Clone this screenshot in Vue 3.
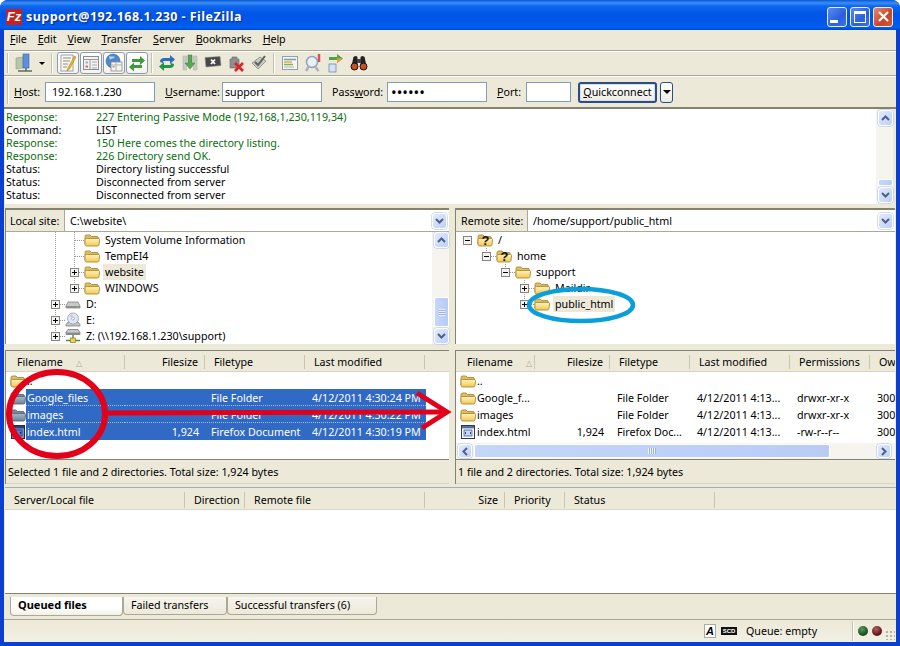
<template>
  <div class="window">
    <svg class="defs" width="0" height="0" aria-hidden="true">
      <defs>
        <linearGradient id="fold" x1="0" y1="0" x2="0" y2="1">
          <stop offset="0" stop-color="#fff3c0" />
          <stop offset="1" stop-color="#f2c94f" />
        </linearGradient>
        <linearGradient id="foldSel" x1="0" y1="0" x2="0" y2="1">
          <stop offset="0" stop-color="#a9b6c6" />
          <stop offset="1" stop-color="#6f8197" />
        </linearGradient>
        <symbol id="folder" viewBox="0 0 16 16">
          <path d="M1 12V4.5C1 3.5 1.6 3 2.5 3H6l1.5 1.5H13c.8 0 1.3.5 1.3 1.2V7H4z" fill="#e6bf5c" stroke="#a07f2c" stroke-width=".8" />
          <path d="M1 7.5C1 6.8 1.5 6.4 2.2 6.4H14.2C15.2 6.4 15.7 7 15.6 7.8L15 12.6C14.9 13.5 14.3 14 13.5 14H2.6C1.6 14 1 13.4 1 12.5Z" fill="url(#fold)" stroke="#a07f2c" stroke-width=".8" />
        </symbol>
        <symbol id="folder-sel" viewBox="0 0 16 16">
          <path d="M1 12V4.5C1 3.5 1.6 3 2.5 3H6l1.5 1.5H13c.8 0 1.3.5 1.3 1.2V7H4z" fill="#7d8ea3" stroke="#4c5c70" stroke-width=".8" />
          <path d="M1 7.5C1 6.8 1.5 6.4 2.2 6.4H14.2C15.2 6.4 15.7 7 15.6 7.8L15 12.6C14.9 13.5 14.3 14 13.5 14H2.6C1.6 14 1 13.4 1 12.5Z" fill="url(#foldSel)" stroke="#4c5c70" stroke-width=".8" />
        </symbol>
        <symbol id="folder-q" viewBox="0 0 16 16">
          <use href="#folder" width="16" height="16" />
          <text x="8.5" y="13" font-size="13" font-weight="700" font-family="Liberation Sans, sans-serif" text-anchor="middle" fill="#111">?</text>
        </symbol>
        <symbol id="html" viewBox="0 0 16 16">
          <rect x="1.5" y="1.5" width="13" height="13" fill="#fff" stroke="#2d3a55" />
          <rect x="2" y="2" width="12" height="2.4" fill="#5c6f94" />
          <rect x="4" y="6" width="8" height="6" fill="#c7d6f4" stroke="#3c5fa8" stroke-width=".8" />
          <path d="M6 8 5 9l1 1M10 8l1 1-1 1" stroke="#223" stroke-width=".8" fill="none" />
        </symbol>
        <symbol id="html-sel" viewBox="0 0 16 16">
          <rect x="1.5" y="1.5" width="13" height="13" fill="#7a92c8" stroke="#1e2a4c" />
          <rect x="2" y="2" width="12" height="2.4" fill="#2f4173" />
          <rect x="4" y="6" width="8" height="6" fill="#5f7fc4" stroke="#1e3a85" stroke-width=".8" />
          <path d="M6 8 5 9l1 1M10 8l1 1-1 1" stroke="#112" stroke-width=".8" fill="none" />
        </symbol>
        <symbol id="drive" viewBox="0 0 16 16">
          <path d="M3 6h10l2 4v2H1v-2z" fill="#c9c9c9" stroke="#777" stroke-width=".7" />
          <path d="M1 10h14v2H1z" fill="#8f8f8f" />
          <circle cx="12.5" cy="11" r=".7" fill="#5fcf5f" />
        </symbol>
        <symbol id="cd" viewBox="0 0 16 16">
          <path d="M3 10h10l2 2.5V14H1v-1.5z" fill="#c4c4c4" stroke="#777" stroke-width=".7" />
          <circle cx="8" cy="6.5" r="5.5" fill="#dfe6f5" stroke="#8b93ab" stroke-width=".7" />
          <circle cx="8" cy="6.5" r="1.5" fill="#fff" stroke="#8b93ab" stroke-width=".6" />
          <path d="M4 4.5A5 5 0 0 1 7 2.2L7.8 5z" fill="#e2b7ec" />
        </symbol>
        <symbol id="netdrive" viewBox="0 0 16 16">
          <path d="M3 1.5h10l2 3v2H1v-2z" fill="#c9c9c9" stroke="#666" stroke-width=".7" />
          <path d="M1 4.6h14v2H1z" fill="#8a8a8a" />
          <path d="M8 7v4M1 12.5h14" stroke="#5a8a3a" stroke-width="1.4" />
          <rect x="5.5" y="10" width="5" height="4.5" fill="#f0cf5a" stroke="#967720" stroke-width=".7" />
        </symbol>
        <symbol id="plus" viewBox="0 0 9 9">
          <rect x=".5" y=".5" width="8" height="8" fill="#f4f3ee" stroke="#848484" />
          <path d="M2 4.5h5M4.5 2v5" stroke="#000" />
        </symbol>
        <symbol id="minus" viewBox="0 0 9 9">
          <rect x=".5" y=".5" width="8" height="8" fill="#f4f3ee" stroke="#848484" />
          <path d="M2 4.5h5" stroke="#000" />
        </symbol>
        <symbol id="chev-up" viewBox="0 0 9 6"><path d="M1 5l3.5-3.5L8 5" fill="none" stroke="#4d6185" stroke-width="2" /></symbol>
        <symbol id="chev-down" viewBox="0 0 9 6"><path d="M1 1l3.5 3.5L8 1" fill="none" stroke="#4d6185" stroke-width="2" /></symbol>
        <symbol id="chev-left" viewBox="0 0 6 9"><path d="M5 1L1.5 4.5 5 8" fill="none" stroke="#4d6185" stroke-width="2" /></symbol>
        <symbol id="chev-right" viewBox="0 0 6 9"><path d="M1 1l3.5 3.5L1 8" fill="none" stroke="#4d6185" stroke-width="2" /></symbol>
      </defs>
    </svg>

    <header class="titlebar">
      <span class="app-logo">Fz</span>
      <span class="title-text">support@192.168.1.230 - FileZilla</span>
      <div class="win-btns">
        <button class="win-btn"><i class="glyph-min" /></button>
        <button class="win-btn"><i class="glyph-max" /></button>
        <button class="win-btn win-btn--close">
          <svg width="13" height="13" viewBox="0 0 13 13"><path d="M2 2l9 9M11 2l-9 9" stroke="#fff" stroke-width="2.2" /></svg>
        </button>
      </div>
    </header>

    <div class="content">
      <nav class="menubar">
        <span v-for="m in menus" :key="m.rest" class="menu-item"><u>{{ m.key }}</u>{{ m.rest }}</span>
      </nav>

      <div class="toolbar">
        <i class="grip" />
        <svg class="tool" width="20" height="20" viewBox="0 0 20 20">
          <path d="M1 5l7-1v11l-7 1z" fill="#b5c7a8" stroke="#8ea383" stroke-width=".6" />
          <rect x="8" y="1" width="6" height="14" fill="#5f8fdc" stroke="#3d68ad" stroke-width=".6" />
          <path d="M3 18h14M11 15v3" stroke="#5d6f57" stroke-width="1.5" />
        </svg>
        <i class="drop-arrow" />
        <i class="tool-sep tool-sep--a" />
        <div class="toggles">
          <button class="toggle">
            <svg width="18" height="18" viewBox="0 0 18 18">
              <rect x="2" y="1" width="12" height="16" fill="#fbf8ee" stroke="#8c8c8c" stroke-width=".8" />
              <path d="M4 4h8M4 7h7M4 10h5M4 13h4" stroke="#8a8a8a" />
              <path d="M15.500 2 9 14l-1 3 2.500-2L17 3z" fill="#f3b92b" stroke="#a87a10" stroke-width=".6" />
            </svg>
          </button>
          <button class="toggle">
            <svg width="18" height="18" viewBox="0 0 18 18">
              <rect x="1.500" y="2.500" width="15" height="13" fill="#f4f3f2" stroke="#8c8c8c" />
              <path d="M1.500 5.500h15M8 5.500v10" stroke="#9a9a9a" />
              <rect x="3.500" y="7.500" width="2.500" height="2" fill="#aab" />
              <rect x="3.500" y="11.500" width="2.500" height="2" fill="#c86a6a" />
              <path d="M10 8h5M10 11h5M10 14h5" stroke="#aaa" />
            </svg>
          </button>
          <button class="toggle">
            <svg width="20" height="20" viewBox="0 0 20 20">
              <circle cx="9" cy="8" r="7" fill="#4f87c9" stroke="#2d5f9e" stroke-width=".6" />
              <path d="M5 3c2 1 4 0 6 1-1 2-4 1-5 3z" fill="#b9d4ee" />
              <rect x="7" y="9" width="11" height="9" fill="#f6f4ee" stroke="#8c8c8c" stroke-width=".8" />
              <path d="M7 12h11M12 9v9" stroke="#b0b0b0" />
              <rect x="8.500" y="13" width="2" height="1.500" fill="#d88" />
            </svg>
          </button>
          <button class="toggle">
            <svg width="20" height="20" viewBox="0 0 20 20">
              <path d="M5 6h8V3l5 4.500L13 12V9H5z" fill="#3f9a3f" />
              <path d="M15 12H7V9.500l-5 4.500 5 4.500V15h8z" fill="#3f9a3f" />
            </svg>
          </button>
        </div>
        <i class="tool-sep tool-sep--b" />
        <div class="tool-group tool-group--actions">
          <svg width="18" height="18" viewBox="0 0 18 18">
            <path d="M2 8c0-3 2-4 4-4h6V1l5 4.500L12 10V7H6C5 7 4.800 8 5 9z" fill="#2f6cbd" />
            <path d="M16 10c0 3-2 4-4 4H6v3L1 12.500 6 8v3h6c1 0 1.200-1 1-2z" fill="#1e9444" />
          </svg>
          <svg width="18" height="18" viewBox="0 0 18 18">
            <path d="M2 2h3.500v14H2zM12.500 2H16v14h-3.500z" fill="#c9c9c6" stroke="#a9a9a6" stroke-width=".5" />
            <path d="M7 1h4v8h3l-5 6-5-6h3z" fill="#58a850" stroke="#3b7f35" stroke-width=".5" />
          </svg>
          <svg width="18" height="18" viewBox="0 0 18 18">
            <path d="M1 3.500 16 2.500l1 9-15 1.500z" fill="#474747" stroke="#8b8b8b" stroke-width=".6" />
            <path d="M7 5.500l4 4.500M11 5.500 7 10" stroke="#fff" stroke-width="1.800" />
          </svg>
          <svg width="18" height="18" viewBox="0 0 18 18">
            <path d="M5 3h5v2h2v9H3V5h2z" fill="#8e8e90" stroke="#6a6a6a" stroke-width=".6" />
            <path d="M8 9l8 8M16 9l-8 8" stroke="#db2328" stroke-width="2.600" />
          </svg>
          <svg width="18" height="18" viewBox="0 0 18 18">
            <path d="M2 9l8-6 6 4-8 8z" fill="#c8c8c3" stroke="#7f7f7a" stroke-width=".7" />
            <path d="M5 8l3 3 7-9" stroke="#62625e" stroke-width="2" fill="none" />
          </svg>
        </div>
        <i class="tool-sep tool-sep--c" />
        <div class="tool-group tool-group--views">
          <svg width="18" height="18" viewBox="0 0 18 18">
            <rect x="1.500" y="2.500" width="15" height="13" fill="#f7f5e8" stroke="#8fa0ae" />
            <path d="M3 5.500h12" stroke="#6f9cc4" stroke-width="1.500" />
            <path d="M3 8h8" stroke="#e2ad3d" stroke-width="1.500" />
            <path d="M3 10.500h9" stroke="#79b35d" stroke-width="1.500" />
            <path d="M3 13h10" stroke="#c9c9b8" stroke-width="1.500" />
          </svg>
          <svg width="18" height="20" viewBox="0 0 18 20">
            <circle cx="8" cy="9" r="5.500" fill="#eaf0f8" stroke="#93a2bb" stroke-width="1.500" />
            <path d="M2 18l3-5" stroke="#a7b2c4" stroke-width="2.500" />
            <path d="M11.500 14l3 4" stroke="#a7b2c4" stroke-width="2.500" />
            <path d="M15 1v8" stroke="#d9525a" stroke-width="2.500" />
          </svg>
          <svg width="18" height="20" viewBox="0 0 18 20">
            <path d="M2 4h8V1l6 4.500L10 10V7H2z" fill="#4ea64a" />
            <path d="M10 5l6 .5L10 10z" fill="#e89a3c" />
            <rect x="2" y="11" width="7" height="8" fill="#d6e2f2" stroke="#5c7fb0" stroke-width=".7" />
          </svg>
          <svg width="18" height="18" viewBox="0 0 18 18">
            <path d="M3 5c0-2 1-3 3-3l1.500 1v7H2z" fill="#222" />
            <path d="M15 5c0-2-1-3-3-3l-1.500 1v7H16z" fill="#222" />
            <circle cx="4.500" cy="12.500" r="3.500" fill="#c94e22" stroke="#111" />
            <circle cx="13.500" cy="12.500" r="3.500" fill="#c94e22" stroke="#111" />
            <rect x="7" y="5" width="4" height="4" fill="#444" />
          </svg>
        </div>
      </div>

      <form class="quickbar" @submit.prevent>
        <i class="grip grip--tall" />
        <label class="qlabel qlabel--host"><u>H</u>ost:</label>
        <input class="qinput qinput--host" value="192.168.1.230" />
        <label class="qlabel qlabel--user"><u>U</u>sername:</label>
        <input class="qinput qinput--user" value="support" />
        <label class="qlabel qlabel--pass">Pass<u>w</u>ord:</label>
        <input class="qinput qinput--pass" type="password" value="secret" />
        <label class="qlabel qlabel--port"><u>P</u>ort:</label>
        <input class="qinput qinput--port" />
        <button class="qbtn" type="button"><u>Q</u>uickconnect</button>
        <button class="qdrop" type="button"><i class="drop-arrow drop-arrow--inline" /></button>
      </form>

      <section class="log">
        <div class="log-lines">
          <div v-for="(l, i) in logLines" :key="i" class="log-line" :class="{ 'log-line--ok': l[0] === 'Response:' }">
            <span class="log-kind">{{ l[0] }}</span><span>{{ l[1] }}</span>
          </div>
        </div>
        <div class="vscroll vscroll--log">
          <span class="sb-btn"><svg width="9" height="6"><use href="#chev-up" /></svg></span>
          <span class="sb-track sb-track--end"><i class="sb-thumb sb-thumb--log" /></span>
          <span class="sb-btn"><svg width="9" height="6"><use href="#chev-down" /></svg></span>
        </div>
      </section>

      <div class="split split--sites">
        <section class="site">
          <div class="site-head">
            <span class="site-label site-label--local">Local site:</span>
            <span class="site-path">C:\website\</span>
            <span class="sb-btn sb-btn--combo"><svg width="9" height="6"><use href="#chev-down" /></svg></span>
          </div>
          <div class="site-body">
            <div class="tree tree--local">
              <div v-for="row in localTree" :key="row.label" class="tree-row">
                <span v-for="(c, i) in row.cells" :key="i" class="tree-cell" :class="`tree-cell--${c}`">
                  <svg v-if="row.exp && i === row.cells.length - 1" width="9" height="9"><use :href="`#${row.exp}`" /></svg>
                </span>
                <svg class="tree-icon" width="16" height="16"><use :href="`#${row.icon}`" /></svg>
                <span class="tree-label" :class="{ 'tree-label--hl': row.hl }">{{ row.label }}</span>
              </div>
            </div>
            <div class="vscroll vscroll--tree">
              <span class="sb-btn"><svg width="9" height="6"><use href="#chev-up" /></svg></span>
              <span class="sb-track sb-track--end"><i class="sb-thumb sb-thumb--tree"><b /></i></span>
              <span class="sb-btn"><svg width="9" height="6"><use href="#chev-down" /></svg></span>
            </div>
          </div>
        </section>
        <section class="site">
          <div class="site-head">
            <span class="site-label site-label--remote">Remote site:</span>
            <span class="site-path">/home/support/public_html</span>
            <span class="sb-btn sb-btn--combo"><svg width="9" height="6"><use href="#chev-down" /></svg></span>
          </div>
          <div class="site-body">
            <div class="tree tree--remote">
              <div v-for="row in remoteTree" :key="row.label" class="tree-row">
                <span v-for="(c, i) in row.cells" :key="i" class="tree-cell" :class="`tree-cell--${c}`">
                  <svg v-if="row.exp && i === row.cells.length - 1" width="9" height="9"><use :href="`#${row.exp}`" /></svg>
                </span>
                <svg class="tree-icon" width="16" height="16"><use :href="`#${row.icon}`" /></svg>
                <span class="tree-label" :class="{ 'tree-label--hl': row.hl }">{{ row.label }}</span>
              </div>
            </div>
          </div>
        </section>
      </div>

      <div class="split split--lists">
        <section class="list list--local">
          <div class="list-head">
            <span class="hcell hcell--name">Filename <em class="sort">△</em></span>
            <span class="hcell hcell--num">Filesize</span>
            <span class="hcell">Filetype</span>
            <span class="hcell">Last modified</span>
            <span class="hcell hcell--fill" />
          </div>
          <div class="list-body">
            <div v-for="f in localFiles" :key="f.name" class="frow" :class="{ 'frow--sel': f.sel }">
              <span class="fname">
                <svg width="16" height="16"><use :href="`#${f.sel ? f.icon + '-sel' : f.icon}`" /></svg>
                <span class="fname-text">{{ f.name }}</span>
              </span>
              <span class="fcell fcell--num">{{ f.size }}</span>
              <span class="fcell fcell--type">{{ f.type }}</span>
              <span class="fcell fcell--date">{{ f.date }}</span>
            </div>
          </div>
          <div class="list-info">Selected 1 file and 2 directories. Total size: 1,924 bytes</div>
        </section>
        <section class="list list--remote">
          <div class="list-head">
            <span class="hcell hcell--name">Filename <em class="sort sort--near">△</em></span>
            <span class="hcell hcell--num">Filesize</span>
            <span class="hcell">Filetype</span>
            <span class="hcell">Last modified</span>
            <span class="hcell">Permissions</span>
            <span class="hcell hcell--last">Ow</span>
          </div>
          <div class="list-body">
            <div v-for="f in remoteFiles" :key="f.name" class="frow">
              <span class="fname">
                <svg width="16" height="16"><use :href="`#${f.icon}`" /></svg>
                <span class="fname-text">{{ f.name }}</span>
              </span>
              <span class="fcell fcell--num">{{ f.size }}</span>
              <span class="fcell fcell--rtype">{{ f.type }}</span>
              <span class="fcell fcell--rdate">{{ f.date }}</span>
              <span class="fcell fcell--rdate">{{ f.perm }}</span>
              <span class="fcell fcell--rdate">{{ f.owner }}</span>
            </div>
            <div class="hscroll">
              <span class="sb-btn sb-btn--h"><svg width="6" height="9"><use href="#chev-left" /></svg></span>
              <span class="sb-track sb-track--h"><i class="sb-thumb sb-thumb--h"><b /></i></span>
              <span class="sb-btn sb-btn--h"><svg width="6" height="9"><use href="#chev-right" /></svg></span>
            </div>
          </div>
          <div class="list-info">1 file and 2 directories. Total size: 1,924 bytes</div>
        </section>
      </div>

      <section class="queue">
        <div class="queue-head">
          <span class="qcell">Server/Local file</span>
          <span class="qcell">Direction</span>
          <span class="qcell">Remote file</span>
          <span class="qcell qcell--num">Size</span>
          <span class="qcell">Priority</span>
          <span class="qcell">Status</span>
          <span class="qcell qcell--fill" />
        </div>
        <div class="queue-body" />
      </section>

      <div class="tabs">
        <span class="tab tab--active">Queued files</span>
        <span class="tab tab--failed">Failed transfers</span>
        <span class="tab tab--done">Successful transfers (6)</span>
      </div>

      <footer class="statusbar">
        <span class="st-icon">A</span>
        <span class="st-badge">SCD</span>
        <span class="st-queue">Queue: empty</span>
        <i class="st-sep" />
        <i class="led led--green" />
        <i class="led led--red" />
        <i class="st-grip" />
      </footer>
    </div>

    <svg class="marks" width="900" height="646" viewBox="0 0 900 646" aria-hidden="true">
      <ellipse cx="57" cy="414" rx="48" ry="42" fill="none" stroke="#e2001a" stroke-width="6" />
      <path d="M107 413 L445 412" stroke="#e2001a" stroke-width="5" fill="none" />
      <path d="M417 393 L447 412 L422 428" stroke="#e2001a" stroke-width="5" fill="none" />
      <ellipse cx="581" cy="305" rx="52" ry="16" fill="none" stroke="#0a9fd8" stroke-width="4.500" />
    </svg>
  </div>
</template>

<script setup>
const menus = [
  { key: 'F', rest: 'ile' },
  { key: 'E', rest: 'dit' },
  { key: 'V', rest: 'iew' },
  { key: 'T', rest: 'ransfer' },
  { key: 'S', rest: 'erver' },
  { key: 'B', rest: 'ookmarks' },
  { key: 'H', rest: 'elp' },
]

const logLines = [
  ['Response:', '227 Entering Passive Mode (192,168,1,230,119,34)'],
  ['Command:', 'LIST'],
  ['Response:', '150 Here comes the directory listing.'],
  ['Response:', '226 Directory send OK.'],
  ['Status:', 'Directory listing successful'],
  ['Status:', 'Disconnected from server'],
  ['Status:', 'Disconnected from server'],
]

const localTree = [
  { cells: ['line', 'tee'], icon: 'folder', label: 'System Volume Information' },
  { cells: ['line', 'tee'], icon: 'folder', label: 'TempEI4' },
  { cells: ['line', 'tee'], exp: 'plus', icon: 'folder', label: 'website', hl: true },
  { cells: ['line', 'end'], exp: 'plus', icon: 'folder', label: 'WINDOWS' },
  { cells: ['tee'], exp: 'plus', icon: 'drive', label: 'D:' },
  { cells: ['tee'], exp: 'plus', icon: 'cd', label: 'E:' },
  { cells: ['end'], exp: 'plus', icon: 'netdrive', label: 'Z: (\\\\192.168.1.230\\support)' },
]

const remoteTree = [
  { cells: ['root'], exp: 'minus', icon: 'folder-q', label: '/' },
  { cells: ['none', 'end'], exp: 'minus', icon: 'folder-q', label: 'home' },
  { cells: ['none', 'none', 'end'], exp: 'minus', icon: 'folder', label: 'support' },
  { cells: ['none', 'none', 'none', 'tee'], exp: 'plus', icon: 'folder', label: 'Maildir' },
  { cells: ['none', 'none', 'none', 'end'], exp: 'plus', icon: 'folder', label: 'public_html', hl: true },
]

const localFiles = [
  { name: '..', icon: 'folder', size: '', type: '', date: '' },
  { name: 'Google_files', icon: 'folder', size: '', type: 'File Folder', date: '4/12/2011 4:30:24 PM', sel: true },
  { name: 'images', icon: 'folder', size: '', type: 'File Folder', date: '4/12/2011 4:30:22 PM', sel: true },
  { name: 'index.html', icon: 'html', size: '1,924', type: 'Firefox Document', date: '4/12/2011 4:30:19 PM', sel: true },
]

const remoteFiles = [
  { name: '..', icon: 'folder', size: '', type: '', date: '', perm: '', owner: '' },
  { name: 'Google_f...', icon: 'folder', size: '', type: 'File Folder', date: '4/12/2011 4:13...', perm: 'drwxr-xr-x', owner: '300' },
  { name: 'images', icon: 'folder', size: '', type: 'File Folder', date: '4/12/2011 4:13...', perm: 'drwxr-xr-x', owner: '300' },
  { name: 'index.html', icon: 'html', size: '1,924', type: 'Firefox Doc...', date: '4/12/2011 4:13...', perm: '-rw-r--r--', owner: '300' },
]
</script>

<style>
html, body { margin: 0; overflow: hidden; background: #fff; }
</style>

<style scoped>
.window {
  position: relative;
  width: 900px;
  height: 646px;
  display: flex;
  flex-direction: column;
  background: #0a3fd0;
  border-radius: 8px 8px 0 0;
  overflow: hidden;
  font-family: "Noto Sans", "Liberation Sans", sans-serif;
  font-size: 10.7px;
  line-height: 13px;
  color: #000;
}
.defs { position: absolute; }
.titlebar {
  height: 30px;
  flex: none;
  box-sizing: border-box;
  display: flex;
  align-items: center;
  padding: 3px 7px 0 6px;
  background: linear-gradient(180deg, #0a58d8 0, #3a8ff5 3px, #0f66ee 6px, #0055e5 14px, #0058ea 24px, #0061f5 27px, #0049c8 30px);
}
.app-logo {
  width: 16px;
  height: 16px;
  background: #c8201c;
  color: #fff;
  font: italic 700 13px/16px "Liberation Sans", sans-serif;
  text-align: center;
}
.title-text {
  margin-left: 4px;
  color: #fff;
  font: 700 12.5px/16px "Open Sans", sans-serif;
  letter-spacing: .45px;
  text-shadow: 1px 1px 1px #0a2a90;
}
.win-btns { margin-left: auto; display: flex; gap: 3px; }
.win-btn {
  width: 20px;
  height: 20px;
  padding: 0;
  box-sizing: border-box;
  display: flex;
  align-items: center;
  justify-content: center;
  border: 1px solid #e8eefc;
  border-radius: 3px;
  background: linear-gradient(135deg, #5a8cf0, #2a5fe0 60%, #3c70ea);
}
.win-btn--close { background: linear-gradient(135deg, #e8886a, #c8452a 60%, #d05a3c); }
.glyph-min { width: 8px; height: 3px; background: #fff; margin: 9px 6px 0 0; }
.glyph-max { width: 10px; height: 8px; border: 1px solid #fff; border-top-width: 3px; }

.content {
  flex: 1;
  min-height: 0;
  display: flex;
  flex-direction: column;
  margin: 0 4px 4px;
  background: #ece9d8;
}

.menubar {
  height: 18px;
  flex: none;
  display: flex;
  align-items: center;
  padding: 0 0 2px 6px;
  gap: 11px;
  letter-spacing: -.1px;
  border-bottom: 1px solid #aca899;
  box-shadow: 0 1px 0 #fff;
}

.toolbar {
  height: 24px;
  flex: none;
  display: flex;
  align-items: center;
  border-bottom: 1px solid #aca899;
  box-shadow: 0 1px 0 #fff;
}
.grip { width: 1px; height: 20px; margin-left: 3px; background: #c4c1ae; box-shadow: 1px 0 0 #fff; flex: none; }
.grip--tall { height: 24px; }
.tool { margin-left: 7px; }
.drop-arrow {
  width: 0;
  height: 0;
  border: 3px solid transparent;
  border-top: 3px solid #000;
  border-bottom: 0;
  margin-left: 4px;
}
.drop-arrow--inline { margin: 0; border-width: 4px; border-bottom: 0; }
.tool-sep { width: 1px; height: 20px; background: #c4c1ae; box-shadow: 1px 0 0 #fff; flex: none; }
.tool-sep--a { margin-left: 6px; }
.toggles { display: flex; gap: 1px; margin-left: 5px; }
.toggle {
  width: 22px;
  height: 22px;
  padding: 0;
  box-sizing: border-box;
  display: flex;
  align-items: center;
  justify-content: center;
  border: 1px solid #8b9cb2;
  border-radius: 3px;
  background: linear-gradient(180deg, #fff, #f4f3ee);
}
.tool-sep--b { margin-left: 3px; }
.tool-group { display: flex; align-items: center; gap: 5px; }
.tool-group--actions { margin-left: 6px; }
.tool-sep--c { margin-left: 5px; }
.tool-group--views { margin-left: 7px; }

.quickbar {
  height: 33px;
  flex: none;
  display: flex;
  align-items: center;
  margin: 0;
  padding-top: 1px;
  border-bottom: 2px solid #85836f;
  box-sizing: border-box;
}
.qlabel { white-space: nowrap; }
.qlabel--host { margin-left: 6px; width: 31px; }
.qlabel--user { margin-left: 10px; width: 57px; }
.qlabel--pass { margin-left: 10px; width: 55px; }
.qlabel--port { margin-left: 10px; width: 29px; }
.qinput {
  height: 20px;
  box-sizing: border-box;
  border: 1px solid #7f9db9;
  padding: 0 2px;
  background: #fff;
  font: inherit;
  outline: none;
}
.qinput--host { width: 110px; padding-left: 6px; }
.qinput--user { width: 100px; }
.qinput--pass { width: 100px; padding-left: 3px; font-size: 15px; }
.qinput--port { width: 45px; }
.qbtn {
  margin-left: 7px;
  width: 79px;
  height: 21px;
  padding: 0;
  font: inherit;
  border: 2px solid #2f4c7e;
  border-radius: 3px;
  box-shadow: inset 0 0 0 1px #cfe0f8;
  background: linear-gradient(180deg, #fff, #ecebe2);
}
.qdrop {
  margin-left: 3px;
  width: 13px;
  height: 21px;
  padding: 0;
  border: 1px solid #2f4c7e;
  border-radius: 3px;
  background: linear-gradient(180deg, #fff, #ecebe2);
  display: flex;
  align-items: center;
  justify-content: center;
}

.log {
  height: 95px;
  flex: none;
  margin: 0 3px 0 1px;
  display: flex;
  background: #fff;
  box-sizing: border-box;
}
.log-lines { flex: 1; padding: 2px 0 0 1px; }
.log-line { height: 13px; display: flex; white-space: nowrap; }
.log-line--ok { color: #0a6e0a; }
.log-kind { width: 90px; flex: none; }

.vscroll {
  width: 17px;
  flex: none;
  box-sizing: border-box;
  display: flex;
  flex-direction: column;
  align-items: flex-end;
  background: #f5f4ee;
}
.vscroll--log { padding: 1px 0; }
.sb-btn {
  width: 15px;
  height: 16px;
  flex: none;
  box-sizing: border-box;
  display: flex;
  align-items: center;
  justify-content: center;
  border: 1px solid #fff;
  border-radius: 3px;
  background: linear-gradient(135deg, #e2ebfe, #bdd0f8);
  box-shadow: 0 0 0 .5px #a9bde4;
}
.sb-track { flex: 1; display: flex; flex-direction: column; min-height: 0; }
.sb-track--end { justify-content: flex-end; }
.sb-thumb {
  display: flex;
  align-items: center;
  justify-content: center;
  box-sizing: border-box;
  border: 1px solid #fff;
  border-radius: 2px;
  background: linear-gradient(90deg, #c5d6fa, #b9ccf6);
}
.sb-thumb--log { width: 15px; height: 7px; margin-bottom: 1px; }
.sb-thumb--tree { width: 15px; height: 30px; margin-bottom: 1px; }
.sb-thumb--tree b { width: 6px; height: 7px; background: repeating-linear-gradient(180deg, #eef3ff 0 1px, #9db3dd 1px 2px); }

.split { flex: none; display: grid; grid-template-columns: 444px 440px; column-gap: 6px; padding-left: 1px; }
.split--sites { height: 137px; margin-top: 4px; }
.site { display: flex; flex-direction: column; border-top: 2px solid #85836f; border-left: 1px solid #85836f; height: 134px; box-sizing: content-box; }
.site-head { height: 21px; flex: none; display: flex; align-items: center; background: #fff; border-bottom: 1px solid #aca899; }
.site-label { flex: none; box-sizing: border-box; height: 21px; line-height: 22px; background: #ece9d8; border-right: 1px solid #aca899; }
.site-label--local { width: 59px; padding-left: 4px; }
.site-label--remote { width: 72px; padding-left: 5px; }
.site-path { flex: 1; padding-left: 5px; line-height: 22px; }
.sb-btn--combo { margin-right: 2px; }
.site-body { flex: 1; min-height: 0; display: flex; background: #fff; }
.tree { flex: 1; min-width: 0; }
.tree--local { padding-left: 40px; }
.tree--remote { padding-left: 2px; }
.tree-row { height: 16px; display: flex; align-items: center; white-space: nowrap; }
.tree-cell {
  width: 19px;
  height: 16px;
  flex: none;
  display: flex;
  align-items: center;
  justify-content: center;
  background-repeat: no-repeat;
}
.tree-cell svg { display: block; }
.tree-cell--line { background-image: repeating-linear-gradient(180deg, #999 0 1px, transparent 1px 2px); background-size: 1px 100%; background-position: center; }
.tree-cell--tee {
  background-image: repeating-linear-gradient(180deg, #999 0 1px, transparent 1px 2px), repeating-linear-gradient(90deg, #999 0 1px, transparent 1px 2px);
  background-size: 1px 100%, 50% 1px;
  background-position: center, right center;
}
.tree-cell--end {
  background-image: repeating-linear-gradient(180deg, #999 0 1px, transparent 1px 2px), repeating-linear-gradient(90deg, #999 0 1px, transparent 1px 2px);
  background-size: 1px 50%, 50% 1px;
  background-position: center top, right center;
}
.tree-cell--root { background: none; }
.tree-icon { flex: none; }
.tree-label { margin-left: 3px; padding: 0 2px; height: 16px; line-height: 16px; }
.tree-label--hl { background: #ece9d8; }

.split--lists { height: 135px; margin-top: 5px; }
.list { display: flex; flex-direction: column; border-top: 1px solid #85836f; border-left: 1px solid #85836f; box-sizing: border-box; height: 134px; }
.list-head {
  height: 20px;
  flex: none;
  display: grid;
  background: #ece9d8;
  border-bottom: 1px solid #d8d5c4;
  overflow: hidden;
}
.list--local .list-head { grid-template-columns: 119px 80px 100px 120px 1fr; }
.list--remote .list-head { grid-template-columns: 79px 75px 80px 100px 80px 25px; }
.hcell {
  display: flex;
  align-items: center;
  padding-left: 9px;
  box-sizing: border-box;
  border-right: 1px solid #c9c6b4;
  margin: 4px 0 2px;
  white-space: nowrap;
}
.hcell--name { padding-left: 11px; }
.hcell--num { justify-content: flex-end; padding: 0 6px 0 0; }
.hcell--fill, .hcell--last { border-right: 0; }
.sort { font-style: normal; color: #aca899; font-size: 8px; margin-left: 13px; }
.sort--near { margin-left: 13px; }
.list-body { flex: 1; min-height: 0; background: #fff; border-bottom: 1px solid #85836f; display: flex; flex-direction: column; }
.frow { height: 17px; flex: none; display: grid; align-items: center; white-space: nowrap; }
.list--local .frow { grid-template-columns: 119px 80px 100px 121px; }
.list--remote .frow { grid-template-columns: 79px 75px 80px 100px 80px 26px; overflow: hidden; }
.fname { display: flex; align-items: center; padding-left: 4px; height: 17px; }
.fname svg { flex: none; }
.fname-text { flex: 1; height: 17px; line-height: 18px; padding-left: 1px; }
.fcell { height: 17px; line-height: 18px; overflow: hidden; }
.fcell--num { text-align: right; padding-right: 6px; }
.fcell--type { padding-left: 6px; }
.fcell--date { padding-left: 7px; }
.fcell--rtype { padding-left: 7px; }
.fcell--rdate { padding-left: 7px; }
.frow--sel .fname-text, .frow--sel .fcell { background-color: #316ac5; color: #fff; }
.frow--sel:not(:last-child) .fname-text, .frow--sel:not(:last-child) .fcell {
  background-image: repeating-linear-gradient(90deg, #a9bde8 0 1px, transparent 1px 2px);
  background-size: 100% 1px;
  background-position: bottom;
  background-repeat: no-repeat;
}
.hscroll { margin-top: auto; height: 16px; display: flex; align-items: center; padding: 0 4px 0 2px; background: #f5f4ee; }
.sb-btn--h { width: 14px; height: 14px; }
.sb-track--h { flex: 1; flex-direction: row; align-items: center; padding: 0 6px 0 2px; }
.sb-thumb--h { width: 356px; height: 14px; }
.sb-thumb--h b { width: 8px; height: 6px; background: repeating-linear-gradient(90deg, #eef3ff 0 1px, #9db3dd 1px 2px); }
.list-info {
  height: 24px;
  flex: none;
  display: flex;
  align-items: center;
  padding: 1px 0 0 2px;
  border-bottom: 1px solid #d8d5c4;
  box-sizing: border-box;
}

.queue {
  margin: 2px 0 0 1px;
  height: 105px;
  flex: none;
  display: flex;
  flex-direction: column;
  border-top: 1px solid #a0aeb8;
  padding-top: 1px;
  box-sizing: content-box;
}
.queue-head {
  height: 20px;
  flex: none;
  display: grid;
  grid-template-columns: 180px 60px 180px 80px 60px 150px 1fr;
  background: #ece9d8;
  border-bottom: 1px solid #d8d5c4;
}
.qcell { display: flex; align-items: center; padding-left: 9px; border-right: 1px solid #c9c6b4; margin: 3px 0 1px; box-sizing: border-box; }
.qcell--num { justify-content: flex-end; padding: 0 6px 0 0; }
.qcell--fill { border-right: 0; }
.queue-body { flex: 1; background: #fff; border-bottom: 1px solid #85836f; }

.tabs { height: 22px; flex: none; display: flex; align-items: flex-start; padding-left: 6px; margin-top: 3px; border-bottom: 1px solid #aca899; box-sizing: content-box; }
.tab {
  box-sizing: border-box;
  height: 18px;
  line-height: 17px;
  padding-left: 7px;
  border: 1px solid #aca899;
  border-top: 0;
  border-radius: 0 0 4px 4px;
  background: linear-gradient(180deg, #f6f5ef, #ece9d8);
}
.tab--active { width: 113px; height: 19px; line-height: 16px; background: linear-gradient(180deg, #fff 60%, #f2f0e6); font-weight: 700; font-size: 11px; }
.tab--failed { width: 104px; }
.tab--done { width: 150px; }

.statusbar {
  flex: 1;
  min-height: 0;
  display: flex;
  align-items: center;
  background: linear-gradient(180deg, #ece9d8, #f2f0e4);
}
.st-icon {
  margin-left: 700px;
  width: 12px;
  height: 14px;
  border: 1px solid #aaa;
  box-sizing: border-box;
  background: #fff;
  font: italic 700 11px/13px "Liberation Sans", sans-serif;
  text-align: center;
}
.st-badge {
  margin-left: 5px;
  width: 16px;
  height: 8px;
  background: #111;
  color: #fff;
  font: 700 6px/8px "Liberation Sans", sans-serif;
  text-align: center;
}
.st-queue { margin-left: 9px; width: 106px; white-space: nowrap; }
.st-sep { width: 1px; height: 20px; background: #c4c1ae; box-shadow: 1px 0 0 #fff; }
.led { width: 10px; height: 10px; border-radius: 50%; margin-left: 4px; }
.led--green { margin-left: 5px; background: radial-gradient(circle at 40% 30%, #5a9a5a, #0f4a1a 70%); }
.led--red { background: radial-gradient(circle at 40% 30%, #b06060, #5a1010 70%); }
.st-grip {
  width: 10px;
  height: 10px;
  margin: 8px 0 0 3px;
  background-image: radial-gradient(#b5b2a0 1px, transparent 1px);
  background-size: 4px 4px;
}

.marks { position: absolute; left: 0; top: 0; pointer-events: none; }
</style>
